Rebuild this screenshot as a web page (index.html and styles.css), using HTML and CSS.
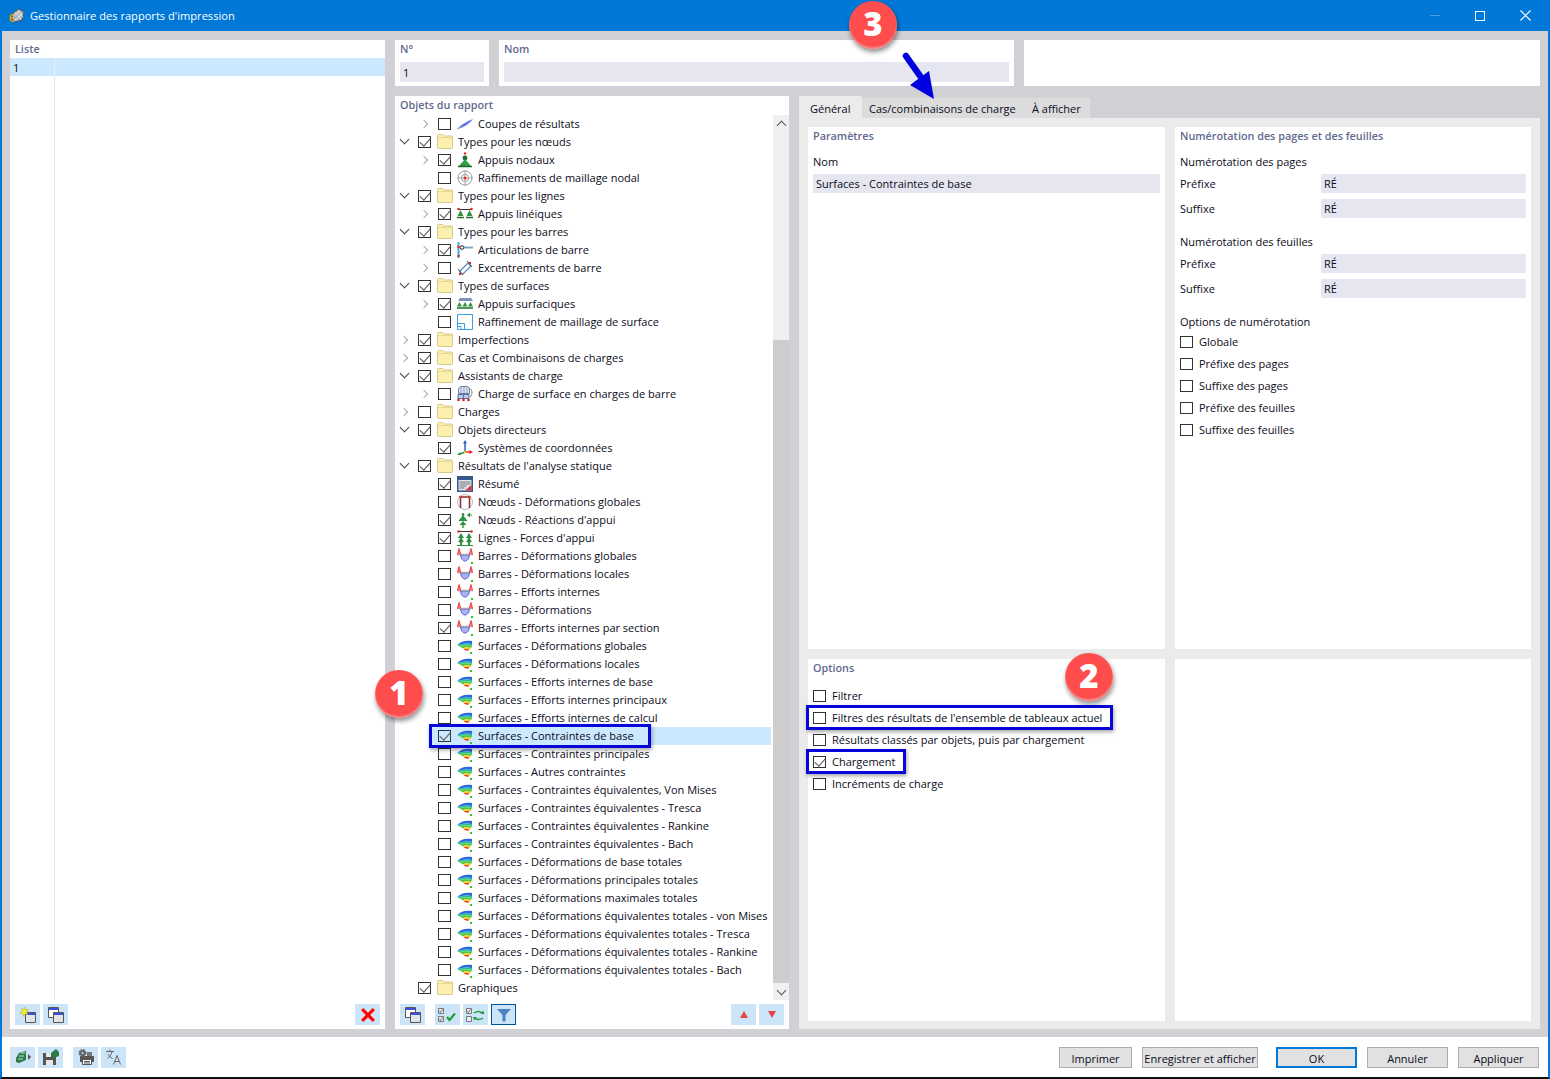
FILE: index.html
```html
<!DOCTYPE html>
<html lang="fr">
<head>
  <meta charset="UTF-8" />
  <title>Gestionnaire des rapports d'impression</title>
  <link rel="stylesheet" href="styles.css">
</head>
<body>
  <!-- Icônes réutilisées dans l'arbre et les barres d'outils -->
  <svg class="defs" width="0" height="0">
    <symbol id="i-folder" viewBox="0 0 16 16"><path d="M.5 13.500V1.500Q.5.500 1.500.500h4l1.500 1.500h7.500q1 0 1 1v10.500q0 1-1 1h-13q-1 0-1-1z" fill="#fbf0ae" stroke="#d6c98f"/><path d="M1 3.500h14" stroke="#e6d993"/></symbol>
    <symbol id="i-cut" viewBox="0 0 16 16"><path d="M0 13C5 8 10 5 16 3 13 7 8 11 3 12z" fill="#6a78ec"/><path d="M0 13l6-2" stroke="#aab" /></symbol>
    <symbol id="i-node" viewBox="0 0 16 16"><circle cx="8" cy="1.500" r="1.200" fill="#e22"/><circle cx="8" cy="6" r="2.400" fill="#1c6b2c"/><path d="M8 7l6 7H2z" fill="#30a040"/><path d="M1 14.500h14" stroke="#1c6b2c" stroke-width="1.500"/></symbol>
    <symbol id="i-mesh" viewBox="0 0 16 16"><circle cx="8" cy="8" r="7" fill="#fff" stroke="#999"/><circle cx="8" cy="8" r="3.600" fill="none" stroke="#999"/><path d="M8 0v16M0 8h16" stroke="#aaa"/><circle cx="8" cy="8" r="1.500" fill="#e22"/></symbol>
    <symbol id="i-line" viewBox="0 0 16 16"><path d="M1 3.500h14" stroke="#333"/><path d="M3.500 4l3 6h-6zM12.500 4l3 6h-6z" fill="#2e9040"/><path d="M0 11.500h7M9 11.500h7" stroke="#1c6b2c" stroke-width="1.400"/><circle cx="1.500" cy="3" r="1.300" fill="#e22"/><circle cx="14.500" cy="3" r="1.300" fill="#e22"/></symbol>
    <symbol id="i-hinge" viewBox="0 0 16 16"><path d="M1.500 0v16" stroke="#4aa3e0" stroke-width="2"/><path d="M7 5.500h9" stroke="#7fa8c8" stroke-width="2"/><circle cx="5" cy="5.500" r="1.800" fill="#fff" stroke="#222"/><circle cx="1.500" cy="5" r="1.200" fill="#e22"/><circle cx="1.500" cy="14" r="1.200" fill="#e22"/></symbol>
    <symbol id="i-ecc" viewBox="0 0 16 16"><path d="M2.500 11.500L11 3l3 3-8.500 8.500z" fill="#fff" stroke="#4a86c0" stroke-width="1.200"/><path d="M1 9l5 6M10 1l5 6" stroke="#555"/><circle cx="3" cy="14" r="1.200" fill="#d22"/><circle cx="13" cy="3" r="1.200" fill="#d22"/></symbol>
    <symbol id="i-surf" viewBox="0 0 16 16"><path d="M3 2h11l2 3H1z" fill="#7a90b8"/><path d="M2.500 6l2.500 4.500H0zM8 6l2.500 4.500h-5zM13.500 6l2.500 4.500h-5z" fill="#2e9040"/><path d="M0 12h16" stroke="#1c6b2c" stroke-width="1.500"/></symbol>
    <symbol id="i-srf" viewBox="0 0 16 16"><path d="M.5.500h15v15H.5z" fill="#fff" stroke="#3aa0e8"/><path d="M.5 9.500h7v6M.5 12.500h3.500v3" fill="none" stroke="#3aa0e8"/></symbol>
    <symbol id="i-wiz" viewBox="0 0 16 16"><path d="M1.500 2.500l2-2h7l2 2v5h-11z" fill="#dfe6f2" stroke="#6a7fa8"/><path d="M4 1v6M7 1v6M10 1v6" stroke="#6a7fa8" stroke-width=".7"/><path d="M1 8.500h11v4H1z" fill="#b9cbe6" stroke="#5b6f96"/><path d="M6.500 8.500v4" stroke="#5b6f96"/><circle cx="1.500" cy="14" r="1.300" fill="#d22"/><circle cx="6.500" cy="14" r="1.300" fill="#d22"/><circle cx="11.500" cy="14" r="1.300" fill="#d22"/><path d="M12 2c3.500 1.500 4 6 1 9" fill="none" stroke="#777"/></symbol>
    <symbol id="i-coord" viewBox="0 0 16 16"><path d="M8 3v9" stroke="#2a5fd0" stroke-width="1.500"/><path d="M8 12h5" stroke="#e22" stroke-width="1.500"/><path d="M8 12l-5 2" stroke="#2a9a3a" stroke-width="1.500"/><path d="M8 0l2 3.500H6z" fill="#2a5fd0"/><path d="M16 12l-3.500 2v-4z" fill="#e22"/><path d="M0 15l3-3 1 3z" fill="#2a9a3a"/><circle cx="8" cy="12" r="1.200" fill="#e8c020"/></symbol>
    <symbol id="i-sum" viewBox="0 0 16 16"><path d="M0 0h16v16H0z" fill="#33588c"/><path d="M1.500 4h13v10.500h-13z" fill="#dfe3ea"/><path d="M2.500 6h11M2.500 8h11M2.500 10h7M2.500 12h5" stroke="#777"/><path d="M8 14.500L14.500 9v5.500z" fill="#d33"/></symbol>
    <symbol id="i-ndef" viewBox="0 0 16 16"><circle cx="8" cy="8" r="7.500" fill="#fff" stroke="#bbb"/><path d="M3.500 14V3h9v11" fill="none" stroke="#8a2a2a" stroke-width="1.500"/><circle cx="3.500" cy="3" r="1.200" fill="#d33"/><circle cx="12.500" cy="3" r="1.200" fill="#d33"/></symbol>
    <symbol id="i-nreac" viewBox="0 0 16 16"><circle cx="6" cy="2.500" r="1.200" fill="#1c6b2c"/><path d="M6 3l4.500 6h-9z" fill="#2e9040"/><path d="M6 16V11M3.500 13L6 10l2.500 3" fill="#2e9040" stroke="#2e9040" stroke-width="1.400"/><path d="M15 3h-4M13 1l-2.500 2L13 5" fill="#2e9040" stroke="#2e9040"/></symbol>
    <symbol id="i-lforce" viewBox="0 0 16 16"><path d="M1 1.500h14" stroke="#333"/><circle cx="1.500" cy="1.500" r="1.300" fill="#e22"/><circle cx="14.500" cy="1.500" r="1.300" fill="#e22"/><path d="M4 3l3 5H1zM12 3l3 5H9z" fill="#2e9040"/><path d="M4 8v7M12 8v7M2 12l2-3 2 3M10 12l2-3 2 3" fill="none" stroke="#2e9040" stroke-width="2"/><path d="M0 15.500h16" stroke="#2e9040"/></symbol>
    <symbol id="i-bar" viewBox="0 0 16 16"><path d="M3.500 7h9C12 11 10 13 8 13S4 11 3.500 7z" fill="#aab2f2" stroke="#4a55d8"/><path d="M0 6.500h16" stroke="#aaa" stroke-width="1.500"/><path d="M.5 6.500L2 .500 3.800 6.500M12.200 6.500L14 .500 15.500 6.500" fill="#f77" stroke="#e33" stroke-width=".9"/><path d="M14 14h2v2h-2z" fill="#2c2"/></symbol>
    <symbol id="i-sfc" viewBox="0 0 16 16"><path d="M0 7C4 3 9 2 15 3v3C10 5 5 5.500 0 7z" fill="#2a6ae0"/><path d="M0 7c5-1.500 10-2 15-1v2C10 7 5 7 3 8.500z" fill="#28c0a0"/><path d="M3 8.500C6 7 10 7 15 8l-1 2c-3-1-6-1-8 .5z" fill="#58c838"/><path d="M6 10.500c2-1.500 5-1.500 8-.5l-1.500 1.500c-2-.5-4-.5-6.500-1z" fill="#e8d020"/><path d="M6.500 11c2 0 4 0 6 .5L11 13c-2-.5-3.500-1-4.500-2z" fill="#e84020"/><path d="M13 14h2v2h-2z" fill="#2c2"/></symbol>
    <symbol id="i-win" viewBox="0 0 16 16"><path d="M.5.500h10v10H.5z" fill="#fff" stroke="#555"/><path d="M1 1h9v2H1z" fill="#3a50e0"/><path d="M5.500 5.500h10v10h-10z" fill="#e4e4e4" stroke="#555"/><path d="M6 6h9v2H6z" fill="#3a50e0"/></symbol>
    <symbol id="i-new" viewBox="0 0 16 16"><path d="M5.500 5.500h10v10h-10z" fill="#e4e4e4" stroke="#555"/><path d="M6 6h9v2H6z" fill="#3a50e0"/><path d="M4.500 0l1 3 3-.5L6.500 5l1.500 2.500-3-.5L3.500 9.500 3 6.500 0 6l2.500-1.500L1.500 1.500l2 1z" fill="#f6ee30" stroke="#b0a820" stroke-width=".5"/></symbol>
    <symbol id="i-all" viewBox="0 0 20 16"><path d="M.5 1.500h5v5h-5zM.5 9.500h5v5h-5z" fill="#eee" stroke="#777"/><path d="M1.500 4l1 1.500 2-3M1.500 12l1 1.500 2-3" fill="none" stroke="#555" stroke-width=".8"/><path d="M9 10l2.500 3L17 6.500" fill="none" stroke="#1fa03c" stroke-width="2.200"/></symbol>
    <symbol id="i-inv" viewBox="0 0 20 16"><path d="M.5 1.500h5v5h-5zM.5 9.500h5v5h-5z" fill="#eee" stroke="#777"/><path d="M1.500 4l1 1.500 2-3" fill="none" stroke="#555" stroke-width=".8"/><path d="M8 6c3-2 6-2 8 0M17 11c-3 2-6 2-8 0" fill="none" stroke="#1fa03c" stroke-width="1.500"/><path d="M17 3.500l1.500 3.500-4 0zM8 13.500L7 10h4z" fill="#1fa03c"/></symbol>
    <symbol id="i-filter" viewBox="0 0 14 14"><path d="M0 1h14L8.500 7v6.500h-3V7z" fill="#4a80c4"/></symbol>
    <symbol id="i-run" viewBox="0 0 16 16"><path d="M1 9l3-5 7-2v9l-7 3-3-1z" fill="#2c7a45"/><path d="M6 4h4M4 7h5M3 10h5" stroke="#bfe0c8"/><path d="M13 5l3 3-3 3z" fill="#555"/></symbol>
    <symbol id="i-save" viewBox="0 0 16 16"><path d="M0 4h11l2 2v10H0z" fill="#555"/><path d="M3 4h6v4H3zM3 11h7v5H3z" fill="#e8e8e8"/><path d="M8 4l5-4 3 3v4l-5 2-3-1z" fill="#2c7a45"/></symbol>
    <symbol id="i-print" viewBox="0 0 16 16"><path d="M2 7h14v6H2z" fill="#555"/><path d="M4.500 10.500h9v5h-9z" fill="#fff" stroke="#555"/><path d="M6 12.500h6M6 14h6" stroke="#555"/><circle cx="4.500" cy="4" r="3" fill="#666" stroke="#666" stroke-dasharray="1.500 .9" stroke-width="2"/><circle cx="4.500" cy="4" r="1" fill="#cce4f7"/><path d="M9 3h5v4H9z" fill="#777"/></symbol>
    <symbol id="i-lang" viewBox="0 0 16 16"><path d="M0 2.500h8M4 .500v2M1.500 9C4 8 5.500 5.500 6 2.500M2 5c1 2 2.500 3.500 4.500 4.500" fill="none" stroke="#666"/><path d="M7.500 15.500l3.500-9 3.500 9M8.800 12.500h4.400" fill="none" stroke="#666"/></symbol>
    <symbol id="i-app" viewBox="0 0 16 16"><path d="M4 5l6-4 5 3-2 8-7 2-3-3z" fill="#a9b3bf" stroke="#555"/><path d="M6 4l6 7M9 2.500l5 7M4.500 8l6-5M6 12l7-6" stroke="#fff" stroke-width=".7"/></symbol>
  </svg>

  <div class="window">
    <header class="titlebar">
      <span class="app-icon"><svg class="ico"><use href="#i-app"/></svg><b class="app-six">6</b></span>
      <span class="title">Gestionnaire des rapports d'impression</span>
      <div class="win-btns">
        <span class="win-min"></span>
        <span class="win-max"></span>
        <svg class="win-close" viewBox="0 0 11 11"><path d="M.5.500l10 10M10.500.500l-10 10" stroke="#fff" stroke-width="1.100"/></svg>
      </div>
    </header>

    <main class="body">
      <section class="panel list-panel">
        <h2 class="head">Liste</h2>
        <div class="list-row"><span class="list-no">1</span></div>
        <div class="list-fill"></div>
        <div class="toolbar">
          <button class="tool"><svg class="ico"><use href="#i-new"/></svg></button>
          <button class="tool"><svg class="ico"><use href="#i-win"/></svg></button>
          <button class="tool push-right"><svg class="ico-x" viewBox="0 0 12 12"><path d="M1 1l10 10M11 1L1 11" stroke="#f00" stroke-width="2.600"/></svg></button>
        </div>
      </section>

      <div class="right-side">
        <div class="top-row">
          <section class="panel no-panel">
            <h2 class="head">N°</h2>
            <div class="input input-top">1</div>
          </section>
          <section class="panel name-panel">
            <h2 class="head">Nom</h2>
            <div class="input input-top"></div>
          </section>
          <section class="panel blank-panel"></section>
        </div>

        <div class="bottom-row">
          <section class="panel objects-panel">
            <h2 class="head">Objets du rapport</h2>
            <div class="tree-wrap">
              <div class="tree">
                <div class="row sub"><i class="chev"></i><i class="cb"></i><svg class="ico"><use href="#i-cut"/></svg><span>Coupes de résultats</span></div>
                <div class="row"><i class="chev open"></i><i class="cb on"></i><svg class="ico"><use href="#i-folder"/></svg><span>Types pour les nœuds</span></div>
                <div class="row sub"><i class="chev"></i><i class="cb on"></i><svg class="ico"><use href="#i-node"/></svg><span>Appuis nodaux</span></div>
                <div class="row sub"><i class="nochev"></i><i class="cb"></i><svg class="ico"><use href="#i-mesh"/></svg><span>Raffinements de maillage nodal</span></div>
                <div class="row"><i class="chev open"></i><i class="cb on"></i><svg class="ico"><use href="#i-folder"/></svg><span>Types pour les lignes</span></div>
                <div class="row sub"><i class="chev"></i><i class="cb on"></i><svg class="ico"><use href="#i-line"/></svg><span>Appuis linéiques</span></div>
                <div class="row"><i class="chev open"></i><i class="cb on"></i><svg class="ico"><use href="#i-folder"/></svg><span>Types pour les barres</span></div>
                <div class="row sub"><i class="chev"></i><i class="cb on"></i><svg class="ico"><use href="#i-hinge"/></svg><span>Articulations de barre</span></div>
                <div class="row sub"><i class="chev"></i><i class="cb"></i><svg class="ico"><use href="#i-ecc"/></svg><span>Excentrements de barre</span></div>
                <div class="row"><i class="chev open"></i><i class="cb on"></i><svg class="ico"><use href="#i-folder"/></svg><span>Types de surfaces</span></div>
                <div class="row sub"><i class="chev"></i><i class="cb on"></i><svg class="ico"><use href="#i-surf"/></svg><span>Appuis surfaciques</span></div>
                <div class="row sub"><i class="nochev"></i><i class="cb"></i><svg class="ico"><use href="#i-srf"/></svg><span>Raffinement de maillage de surface</span></div>
                <div class="row"><i class="chev"></i><i class="cb on"></i><svg class="ico"><use href="#i-folder"/></svg><span>Imperfections</span></div>
                <div class="row"><i class="chev"></i><i class="cb on"></i><svg class="ico"><use href="#i-folder"/></svg><span>Cas et Combinaisons de charges</span></div>
                <div class="row"><i class="chev open"></i><i class="cb on"></i><svg class="ico"><use href="#i-folder"/></svg><span>Assistants de charge</span></div>
                <div class="row sub"><i class="chev"></i><i class="cb"></i><svg class="ico"><use href="#i-wiz"/></svg><span>Charge de surface en charges de barre</span></div>
                <div class="row"><i class="chev"></i><i class="cb"></i><svg class="ico"><use href="#i-folder"/></svg><span>Charges</span></div>
                <div class="row"><i class="chev open"></i><i class="cb on"></i><svg class="ico"><use href="#i-folder"/></svg><span>Objets directeurs</span></div>
                <div class="row sub"><i class="nochev"></i><i class="cb on"></i><svg class="ico"><use href="#i-coord"/></svg><span>Systèmes de coordonnées</span></div>
                <div class="row"><i class="chev open"></i><i class="cb on"></i><svg class="ico"><use href="#i-folder"/></svg><span>Résultats de l'analyse statique</span></div>
                <div class="row sub"><i class="nochev"></i><i class="cb on"></i><svg class="ico"><use href="#i-sum"/></svg><span>Résumé</span></div>
                <div class="row sub"><i class="nochev"></i><i class="cb"></i><svg class="ico"><use href="#i-ndef"/></svg><span>Nœuds - Déformations globales</span></div>
                <div class="row sub"><i class="nochev"></i><i class="cb on"></i><svg class="ico"><use href="#i-nreac"/></svg><span>Nœuds - Réactions d'appui</span></div>
                <div class="row sub"><i class="nochev"></i><i class="cb on"></i><svg class="ico"><use href="#i-lforce"/></svg><span>Lignes - Forces d'appui</span></div>
                <div class="row sub"><i class="nochev"></i><i class="cb"></i><svg class="ico"><use href="#i-bar"/></svg><span>Barres - Déformations globales</span></div>
                <div class="row sub"><i class="nochev"></i><i class="cb"></i><svg class="ico"><use href="#i-bar"/></svg><span>Barres - Déformations locales</span></div>
                <div class="row sub"><i class="nochev"></i><i class="cb"></i><svg class="ico"><use href="#i-bar"/></svg><span>Barres - Efforts internes</span></div>
                <div class="row sub"><i class="nochev"></i><i class="cb"></i><svg class="ico"><use href="#i-bar"/></svg><span>Barres - Déformations</span></div>
                <div class="row sub"><i class="nochev"></i><i class="cb on"></i><svg class="ico"><use href="#i-bar"/></svg><span>Barres - Efforts internes par section</span></div>
                <div class="row sub"><i class="nochev"></i><i class="cb"></i><svg class="ico"><use href="#i-sfc"/></svg><span>Surfaces - Déformations globales</span></div>
                <div class="row sub"><i class="nochev"></i><i class="cb"></i><svg class="ico"><use href="#i-sfc"/></svg><span>Surfaces - Déformations locales</span></div>
                <div class="row sub"><i class="nochev"></i><i class="cb"></i><svg class="ico"><use href="#i-sfc"/></svg><span>Surfaces - Efforts internes de base</span></div>
                <div class="row sub"><i class="nochev"></i><i class="cb"></i><svg class="ico"><use href="#i-sfc"/></svg><span>Surfaces - Efforts internes principaux</span></div>
                <div class="row sub"><i class="nochev"></i><i class="cb"></i><svg class="ico"><use href="#i-sfc"/></svg><span>Surfaces - Efforts internes de calcul</span></div>
                <div class="row sub selected"><i class="nochev"></i><i class="cb on"></i><svg class="ico"><use href="#i-sfc"/></svg><span>Surfaces - Contraintes de base</span></div>
                <div class="row sub"><i class="nochev"></i><i class="cb"></i><svg class="ico"><use href="#i-sfc"/></svg><span>Surfaces - Contraintes principales</span></div>
                <div class="row sub"><i class="nochev"></i><i class="cb"></i><svg class="ico"><use href="#i-sfc"/></svg><span>Surfaces - Autres contraintes</span></div>
                <div class="row sub"><i class="nochev"></i><i class="cb"></i><svg class="ico"><use href="#i-sfc"/></svg><span>Surfaces - Contraintes équivalentes, Von Mises</span></div>
                <div class="row sub"><i class="nochev"></i><i class="cb"></i><svg class="ico"><use href="#i-sfc"/></svg><span>Surfaces - Contraintes équivalentes - Tresca</span></div>
                <div class="row sub"><i class="nochev"></i><i class="cb"></i><svg class="ico"><use href="#i-sfc"/></svg><span>Surfaces - Contraintes équivalentes - Rankine</span></div>
                <div class="row sub"><i class="nochev"></i><i class="cb"></i><svg class="ico"><use href="#i-sfc"/></svg><span>Surfaces - Contraintes équivalentes - Bach</span></div>
                <div class="row sub"><i class="nochev"></i><i class="cb"></i><svg class="ico"><use href="#i-sfc"/></svg><span>Surfaces - Déformations de base totales</span></div>
                <div class="row sub"><i class="nochev"></i><i class="cb"></i><svg class="ico"><use href="#i-sfc"/></svg><span>Surfaces - Déformations principales totales</span></div>
                <div class="row sub"><i class="nochev"></i><i class="cb"></i><svg class="ico"><use href="#i-sfc"/></svg><span>Surfaces - Déformations maximales totales</span></div>
                <div class="row sub"><i class="nochev"></i><i class="cb"></i><svg class="ico"><use href="#i-sfc"/></svg><span>Surfaces - Déformations équivalentes totales - von Mises</span></div>
                <div class="row sub"><i class="nochev"></i><i class="cb"></i><svg class="ico"><use href="#i-sfc"/></svg><span>Surfaces - Déformations équivalentes totales - Tresca</span></div>
                <div class="row sub"><i class="nochev"></i><i class="cb"></i><svg class="ico"><use href="#i-sfc"/></svg><span>Surfaces - Déformations équivalentes totales - Rankine</span></div>
                <div class="row sub"><i class="nochev"></i><i class="cb"></i><svg class="ico"><use href="#i-sfc"/></svg><span>Surfaces - Déformations équivalentes totales - Bach</span></div>
                <div class="row"><i class="nochev"></i><i class="cb on"></i><svg class="ico"><use href="#i-folder"/></svg><span>Graphiques</span></div>
              </div>
              <div class="scrollbar">
                <i class="sb-arrow sb-up"></i>
                <div class="sb-track"><div class="sb-thumb"></div></div>
                <i class="sb-arrow sb-down"></i>
              </div>
            </div>
            <div class="toolbar">
              <button class="tool gap-after"><svg class="ico"><use href="#i-win"/></svg></button>
              <button class="tool"><svg class="ico-wide"><use href="#i-all"/></svg></button>
              <button class="tool"><svg class="ico-wide"><use href="#i-inv"/></svg></button>
              <button class="tool active"><svg class="ico-filter"><use href="#i-filter"/></svg></button>
              <button class="tool push-right"><i class="tri tri-up"></i></button>
              <button class="tool"><i class="tri tri-down"></i></button>
            </div>
          </section>

          <section class="tabs">
            <nav class="tab-strip">
              <span class="tab current">Général</span>
              <span class="tab">Cas/combinaisons de charge</span>
              <span class="tab">À afficher</span>
            </nav>
            <div class="tab-page">
              <div class="panel card">
                <h2 class="head">Paramètres</h2>
                <div class="label first">Nom</div>
                <div class="input wide">Surfaces - Contraintes de base</div>
              </div>
              <div class="panel card">
                <h2 class="head">Numérotation des pages et des feuilles</h2>
                <div class="label first">Numérotation des pages</div>
                <div class="field"><span>Préfixe</span><div class="input">RÉ</div></div>
                <div class="field"><span>Suffixe</span><div class="input">RÉ</div></div>
                <div class="label group">Numérotation des feuilles</div>
                <div class="field"><span>Préfixe</span><div class="input">RÉ</div></div>
                <div class="field"><span>Suffixe</span><div class="input">RÉ</div></div>
                <div class="label group">Options de numérotation</div>
                <div class="checks tight">
                  <label class="check"><i class="cb"></i>Globale</label>
                  <label class="check"><i class="cb"></i>Préfixe des pages</label>
                  <label class="check"><i class="cb"></i>Suffixe des pages</label>
                  <label class="check"><i class="cb"></i>Préfixe des feuilles</label>
                  <label class="check"><i class="cb"></i>Suffixe des feuilles</label>
                </div>
              </div>
              <div class="panel card">
                <h2 class="head">Options</h2>
                <div class="checks">
                  <label class="check"><i class="cb"></i>Filtrer</label>
                  <label class="check"><i class="cb"></i>Filtres des résultats de l'ensemble de tableaux actuel</label>
                  <label class="check"><i class="cb"></i>Résultats classés par objets, puis par chargement</label>
                  <label class="check"><i class="cb on"></i>Chargement</label>
                  <label class="check"><i class="cb"></i>Incréments de charge</label>
                </div>
              </div>
              <div class="panel card"></div>
            </div>
          </section>
        </div>
      </div>
    </main>

    <footer class="footer">
      <button class="tool"><svg class="ico"><use href="#i-run"/></svg></button>
      <button class="tool"><svg class="ico"><use href="#i-save"/></svg></button>
      <button class="tool gap-before"><svg class="ico"><use href="#i-print"/></svg></button>
      <button class="tool"><svg class="ico"><use href="#i-lang"/></svg></button>
      <button class="btn btn-print">Imprimer</button>
      <button class="btn btn-save">Enregistrer et afficher</button>
      <button class="btn btn-ok">OK</button>
      <button class="btn">Annuler</button>
      <button class="btn">Appliquer</button>
    </footer>

    <!-- Annotations posées sur la capture -->
    <div class="mark mark-tree"></div>
    <div class="mark mark-filter"></div>
    <div class="mark mark-load"></div>
    <div class="badge badge-1">1</div>
    <div class="badge badge-2">2</div>
    <div class="badge badge-3">3</div>
    <svg class="arrow" viewBox="0 0 40 50"><path d="M5 4L24 31" stroke="#0000e0" stroke-width="6.500" stroke-linecap="round"/><path d="M33 47L28 19 9 33z" fill="#0000e0"/></svg>
  </div>
</body>
</html>
```

FILE: styles.css
```css
* {
  box-sizing: border-box;
}
html, body {
  margin: 0;
  padding: 0;
  height: 100%;
}
body {
  font-family: "Open Sans", "Noto Sans", sans-serif;
  font-size: 11px;
  color: #0b0b20;
  background: #fff;
}
.defs {
  position: absolute;
}
button {
  font: inherit;
  color: inherit;
  padding: 0;
}

/* Fenêtre */
.window {
  position: relative;
  width: 1550px;
  height: 1079px;
  display: flex;
  flex-direction: column;
  border-left: 2px solid #0078d7;
  border-right: 2px solid #0078d7;
  border-bottom: 2px solid #111;
  background: #d0d0d5;
}
.titlebar {
  height: 31px;
  flex: none;
  display: flex;
  align-items: center;
  background: #0078d7;
  color: #fff;
  padding-left: 7px;
}
.app-icon {
  position: relative;
  width: 16px;
  height: 16px;
  margin-right: 5px;
}
.app-six {
  position: absolute;
  left: 0;
  top: 5px;
  font: 700 10px/11px "Liberation Sans", sans-serif;
  color: #e8a000;
}
.title {
  font-size: 11.1px;
}
.win-btns {
  margin-left: auto;
  display: flex;
  align-items: center;
}
.win-min {
  width: 10px;
  height: 1px;
  background: #4a9fe3;
  margin-right: 35px;
}
.win-max {
  width: 10px;
  height: 10px;
  border: 1px solid #fff;
  margin-right: 35px;
}
.win-close {
  width: 11px;
  height: 11px;
  margin-right: 17px;
}

/* Zone principale */
.body {
  flex: 1;
  display: flex;
  gap: 10px;
  padding: 9px 8px 8px 8px;
  min-height: 0;
}
.panel {
  background: #fff;
}
.head {
  margin: 0;
  font-size: 10.8px;
  font-weight: 600;
  color: #61698f;
  line-height: 18px;
}
.list-panel {
  width: 375px;
  display: flex;
  flex-direction: column;
}
.list-panel .head {
  padding-left: 5px;
}
.list-row {
  height: 18px;
  line-height: 20px;
  background: #cce8ff;
  padding-left: 3px;
  display: flex;
}
.list-no {
  width: 42px;
  border-right: 1px solid #e4f2fd;
}
.list-fill {
  flex: 1;
  margin-left: 44px;
  width: 1px;
  background: #e6e6e6;
}
.toolbar {
  display: flex;
  align-items: center;
  gap: 3px;
  height: 29px;
  padding: 4px 5px;
  flex: none;
}
.tool {
  width: 25px;
  height: 21px;
  border: 0;
  background: #cce4f7;
  display: flex;
  align-items: center;
  justify-content: center;
}
.push-right {
  margin-left: auto;
}
.ico {
  width: 16px;
  height: 16px;
  flex: none;
}
.ico-x {
  width: 14px;
  height: 14px;
}
.ico-wide {
  width: 20px;
  height: 16px;
}
.ico-filter {
  width: 14px;
  height: 14px;
}
.active {
  border: 1px solid #005499;
}
.gap-after {
  margin-right: 7px;
}
.gap-before {
  margin-left: 7px;
}
.tri {
  width: 0;
  height: 0;
  border-left: 4px solid transparent;
  border-right: 4px solid transparent;
}
.tri-up {
  border-bottom: 7px solid #e64545;
}
.tri-down {
  border-top: 7px solid #e64545;
}

.right-side {
  flex: 1;
  display: flex;
  flex-direction: column;
  gap: 10px;
  min-width: 0;
}
.top-row {
  height: 46px;
  flex: none;
  display: flex;
  gap: 10px;
}
.no-panel, .name-panel {
  padding: 0 5px;
}
.no-panel {
  width: 94px;
}
.name-panel {
  width: 515px;
}
.blank-panel {
  flex: 1;
}
.input {
  background: #e6e6f0;
  height: 19px;
  line-height: 19px;
  padding-left: 3px;
}
.input-top {
  height: 20px;
  margin-top: 4px;
  line-height: 22px;
}
.bottom-row {
  flex: 1;
  display: flex;
  gap: 10px;
  min-height: 0;
}

/* Arbre des objets */
.objects-panel {
  width: 394px;
  display: flex;
  flex-direction: column;
}
.objects-panel .head {
  padding-left: 5px;
  height: 19px;
  flex: none;
}
.tree-wrap {
  flex: 1;
  display: flex;
  min-height: 0;
}
.tree {
  flex: 1;
  min-width: 0;
}
.row {
  height: 18px;
  display: flex;
  align-items: center;
  white-space: nowrap;
}
.row > span {
  margin-bottom: 2px;
}
.row.sub {
  padding-left: 20px;
}
.row.selected {
  margin-right: 2px;
  background: linear-gradient(to right, #fff 37px, #cce8ff 37px);
}
.chev, .nochev {
  width: 20px;
  height: 18px;
  flex: none;
  position: relative;
}
.chev::after {
  content: "";
  position: absolute;
  left: 6px;
  top: 6px;
  width: 5px;
  height: 5px;
  border-top: 1.5px solid #a8a8a8;
  border-right: 1.5px solid #a8a8a8;
  transform: rotate(45deg);
}
.chev.open::after {
  left: 6px;
  top: 3px;
  width: 6px;
  height: 6px;
  border-color: #444;
  transform: rotate(135deg);
}
.cb {
  width: 13px;
  height: 12px;
  flex: none;
  border: 1px solid #333;
  background: #fff;
  position: relative;
  display: inline-block;
}
.row .cb {
  margin: 0 7px 0 3px;
}
.row.selected .cb {
  background: #cce8ff;
}
.cb.on::after {
  content: "";
  position: absolute;
  left: 3px;
  top: -1px;
  width: 5px;
  height: 9px;
  border-right: 1.5px solid #555;
  border-bottom: 1.5px solid #555;
  transform: rotate(42deg);
}
.row .ico {
  margin-left: -1px;
  margin-right: 5px;
}
.scrollbar {
  width: 16px;
  flex: none;
  display: flex;
  flex-direction: column;
  background: #f0f0f0;
}
.sb-arrow {
  height: 17px;
  flex: none;
  position: relative;
}
.sb-arrow::after {
  content: "";
  position: absolute;
  left: 5px;
  width: 6px;
  height: 6px;
  border-top: 1.5px solid #555;
  border-left: 1.5px solid #555;
}
.sb-up::after {
  top: 7px;
  transform: rotate(45deg);
}
.sb-down::after {
  top: 4px;
  transform: rotate(225deg);
}
.sb-track {
  flex: 1;
  display: flex;
  flex-direction: column;
  justify-content: flex-end;
}
.sb-thumb {
  height: 643px;
  background: #cdcdcd;
}

/* Onglets */
.tabs {
  flex: 1;
  display: flex;
  flex-direction: column;
  min-width: 0;
}
.tab-strip {
  height: 22px;
  flex: none;
  display: flex;
  align-items: flex-end;
}
.tab {
  height: 20px;
  line-height: 21px;
  background: #dcdcdc;
  padding: 0 7px;
  white-space: nowrap;
}
.tab:nth-child(2) {
  width: 162px;
}
.tab:nth-child(3) {
  width: 66px;
  padding-left: 8px;
}
.tab.current {
  height: 22px;
  width: 63px;
  line-height: 25px;
  background: #ebebeb;
  padding-left: 11px;
}
.tab-page {
  flex: 1;
  background: #ebebeb;
  padding: 9px 9px 8px;
  display: grid;
  grid-template-columns: 357px 356px;
  grid-template-rows: 522px 1fr;
  gap: 10px;
}
.card {
  padding: 0 5px;
  min-height: 0;
}
.label {
  line-height: 18px;
}
.label.first {
  margin-top: 8px;
}
.label.group {
  margin-top: 12px;
}
.input.wide {
  margin-top: 3px;
}
.field {
  display: flex;
  align-items: center;
  height: 25px;
}
.field > span {
  width: 141px;
}
.field .input {
  width: 205px;
}
.checks {
  display: flex;
  flex-direction: column;
  gap: 4px;
  margin-top: 10px;
}
.checks.tight {
  margin-top: 2px;
}
.check {
  height: 18px;
  padding-bottom: 2px;
  display: flex;
  align-items: center;
  gap: 6px;
  white-space: nowrap;
}
.check .cb {
  margin-top: 2px;
}

/* Pied de fenêtre */
.footer {
  height: 40px;
  flex: none;
  background: #fff;
  display: flex;
  align-items: center;
  gap: 3px;
  padding-left: 8px;
}
.btn {
  width: 81px;
  height: 21px;
  background: #e1e1e1;
  border: 1px solid #adadad;
  margin-left: 7px;
  padding-top: 2px;
  white-space: nowrap;
}
.btn-print {
  width: 73px;
  margin-left: auto;
}
.btn-save {
  width: 116px;
}
.btn-ok {
  border: 2px solid #0078d7;
  margin-left: 15px;
}
.footer .btn:last-child {
  margin-right: 9px;
}

/* Annotations */
.mark {
  position: absolute;
  border: 3px solid #0606d8;
  box-shadow: 1px 2px 4px rgba(0, 0, 0, 0.35);
}
.mark-tree {
  left: 427px;
  top: 724px;
  width: 222px;
  height: 24px;
}
.mark-filter {
  left: 804px;
  top: 705px;
  width: 307px;
  height: 25px;
}
.mark-load {
  left: 804px;
  top: 749px;
  width: 100px;
  height: 25px;
}
.badge {
  position: absolute;
  width: 48px;
  height: 48px;
  border-radius: 50%;
  background: radial-gradient(circle at 50% 40%, #ff4d4d 60%, #e33a3a 100%);
  box-shadow: 1px 3px 5px rgba(0, 0, 0, 0.45), inset 0 -2px 2px rgba(255, 255, 255, 0.35);
  color: #fff;
  font-family: "Open Sans", sans-serif;
  font-weight: 800;
  font-size: 33px;
  line-height: 46px;
  text-align: center;
}
.badge-1 {
  left: 373px;
  top: 670px;
}
.badge-2 {
  left: 1063px;
  top: 653px;
}
.badge-3 {
  left: 847px;
  top: 1px;
}
.arrow {
  position: absolute;
  left: 899px;
  top: 52px;
  width: 40px;
  height: 50px;
}
```
